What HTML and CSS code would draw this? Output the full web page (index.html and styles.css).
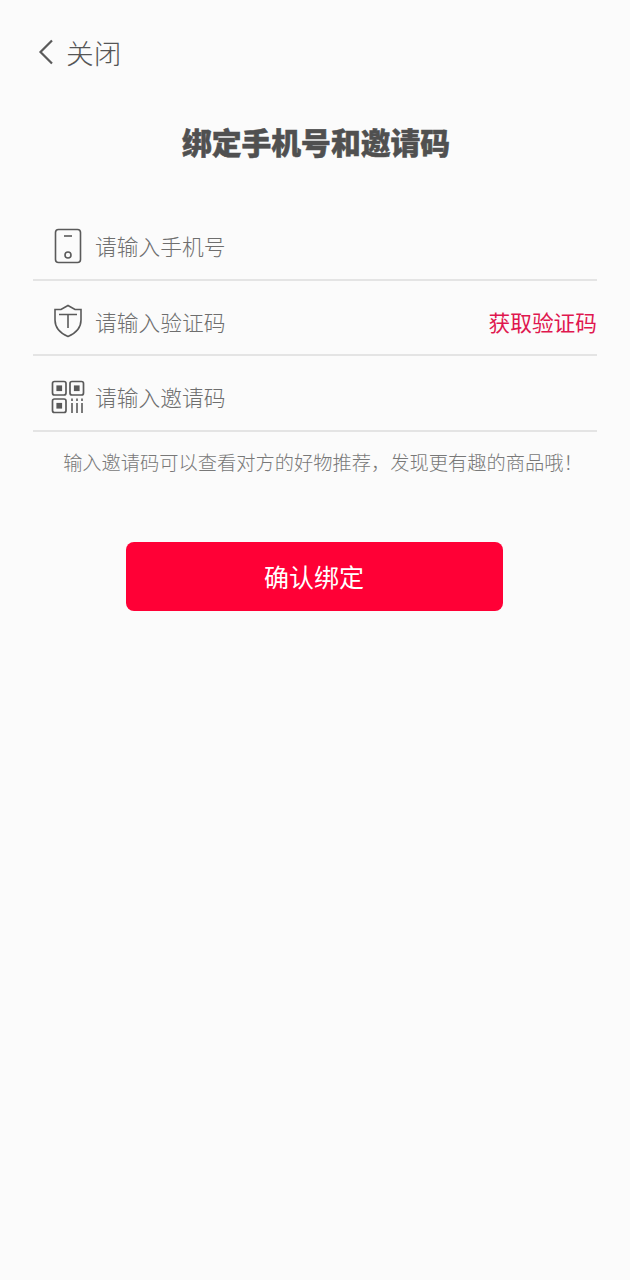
FILE: index.html
```html
<!DOCTYPE html>
<html lang="zh-CN">
    <head>
        <meta charset="UTF-8">
        <title>绑定手机号和邀请码</title>
        <link rel="stylesheet" href="styles.css">
    </head>

    <body>
        <header class="top-bar">
            <svg class="back-icon" width="18" height="28" viewBox="0 0 18 28">
                <path d="M15 2.5 L3.5 14 L15 25.5" />
            </svg>
            <span class="close-text">关闭</span>
        </header>

        <h1 class="page-title">绑定手机号和邀请码</h1>

        <!-- Form rows -->
        <div class="form">
            <div class="form-row">
                <div class="row-icon">
                    <svg width="28" height="36" viewBox="0 0 28 36">
                        <rect x="1.5" y="1.5" width="25" height="33" rx="3" />
                        <path d="M10 8 H18" />
                        <circle cx="14" cy="27" r="3" />
                    </svg>
                </div>
                <span class="placeholder">请输入手机号</span>
            </div>
            <div class="form-row">
                <div class="row-icon">
                    <svg width="30" height="34" viewBox="0 0 30 34">
                        <path d="M15 1.5 L22 5.5 H28 V16 C28 24 22 29.5 15 32.5 C8 29.5 2 24 2 16 V5.5 H8 Z" />
                        <path d="M6 10.5 H24 M15 10.5 V24" />
                    </svg>
                </div>
                <span class="placeholder">请输入验证码</span>
                <span class="get-code">获取验证码</span>
            </div>
            <div class="form-row">
                <div class="row-icon">
                    <svg class="qr-icon" width="34" height="34" viewBox="0 0 34 34">
                        <rect x="1.5" y="1.5" width="13.5" height="13.5" rx="2" />
                        <rect x="19" y="1.5" width="13.5" height="13.5" rx="2" />
                        <rect x="1.5" y="19" width="13.5" height="13.5" rx="2" />
                        <rect class="dot" x="6.25" y="6.25" width="4" height="4" />
                        <rect class="dot" x="23.75" y="6.25" width="4" height="4" />
                        <rect class="dot" x="6.25" y="23.75" width="4" height="4" />
                        <path d="M21 18.5 V21 M21 23 V33 M26 18.5 V21 M26 23 V33 M31 18.5 V21 M31 23 V33" />
                    </svg>
                </div>
                <span class="placeholder">请输入邀请码</span>
            </div>
        </div>

        <p class="hint">输入邀请码可以查看对方的好物推荐，发现更有趣的商品哦！</p>

        <div class="btn-wrap">
            <button class="confirm-btn">确认绑定</button>
        </div>
    </body>
</html>
```

FILE: styles.css
```css
*{
    box-sizing: border-box;
}

html, body{
    margin: 0;
    height: 100%;
}

body{
    background-color: #fbfbfb;
    font-family: "Noto Sans CJK SC", "Noto Sans", sans-serif;
    color: #777;
}

.top-bar{
    display: flex;
    align-items: center;
    height: 50px;
    margin-top: 27px;
    padding-left: 37px;
}

.back-icon path{
    fill: none;
    stroke: #5a5a5a;
    stroke-width: 2.2;
}

.close-text{
    margin-left: 11px;
    font-size: 27.7px;
    line-height: 50px;
    font-weight: 300;
    color: #555;
}

.page-title{
    margin: 39px 0 0;
    padding-left: 2px;
    height: 50px;
    line-height: 50px;
    text-align: center;
    font-size: 29.8px;
    font-weight: 900;
    color: #505050;
    -webkit-text-stroke: 0.5px #505050;
}

.form{
    margin: 39px 33px 0 33px;
}

.form-row{
    display: flex;
    align-items: center;
    height: 75.5px;
    padding-top: 8px;
    border-bottom: 2px solid #e4e4e4;
}

.row-icon{
    display: flex;
    justify-content: center;
    align-items: center;
    width: 62px;
    padding-left: 8px;
    flex-shrink: 0;
}

.row-icon svg *{
    fill: none;
    stroke: #5a5a5a;
    stroke-width: 1.6;
}

.row-icon .qr-icon rect{
    stroke-width: 1.7;
}

.row-icon svg .dot{
    fill: #5a5a5a;
}

.placeholder{
    font-size: 21.75px;
    font-weight: 300;
    color: #6e6e6e;
}

.get-code{
    margin-left: auto;
    font-size: 21.7px;
    color: #e0174f;
}

.hint{
    margin: 16px 0 0;
    padding-left: 16px;
    text-align: center;
    font-size: 19.25px;
    line-height: 28px;
    font-weight: 300;
    color: #787878;
}

.btn-wrap{
    display: flex;
    justify-content: center;
    margin-top: 66px;
    padding-right: 2px;
}

.confirm-btn{
    width: 377px;
    height: 69px;
    border: none;
    border-radius: 8px;
    background-color: #ff0036;
    color: #fff;
    font-family: inherit;
    font-size: 25px;
    letter-spacing: 0;
}
```
